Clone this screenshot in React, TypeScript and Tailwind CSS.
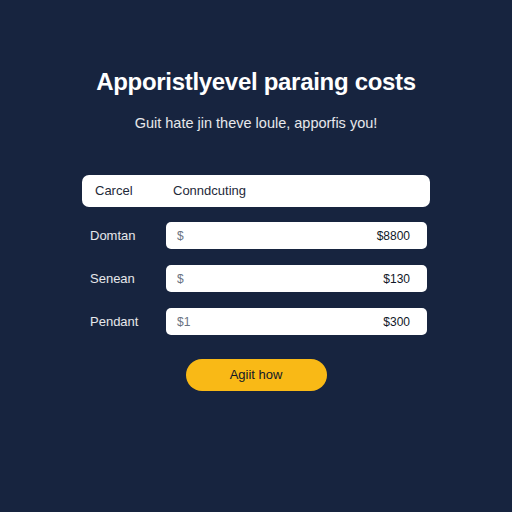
import React from "react";

const ROWS = [
	{ label: "Domtan", prefix: "$", amount: "$8800" },
	{ label: "Senean", prefix: "$", amount: "$130" },
	{ label: "Pendant", prefix: "$1", amount: "$300" },
];

export default function App(): React.ReactElement {
	return (
		<div
			className="w-[512px] h-[512px] bg-[#17243f] flex flex-col items-center text-white"
			style={{ fontFamily: "'Liberation Sans', Arial, sans-serif" }}
		>
			<h1 className="mt-[66px] text-[24px] leading-[32px] font-bold tracking-[-0.3px]">
				Apporistlyevel paraing costs
			</h1>
			<p className="mt-[16px] text-[14.5px] leading-[18px] text-white/90">Guit hate jin theve loule, apporfis you!</p>

			{/* top select-like field */}
			<div className="mt-[43px] w-[348px] h-[32px] bg-white rounded-[7px] flex items-center text-[13px] text-gray-800">
				<span className="w-[91px] pl-[13px]">Carcel</span>
				<span>Conndcuting</span>
			</div>

			<div className="mt-[15px] w-[348px] flex flex-col gap-[16px]">
				{ROWS.map(row => (
					<div key={row.label} className="flex items-center">
						<span className="w-[84px] pl-[8px] text-[13px] text-white/90">{row.label}</span>
						<div className="w-[261px] h-[27px] bg-white rounded-[5px] flex items-center justify-between px-[11px] pr-[17px] text-[12px]">
							<span className="text-gray-500">{row.prefix}</span>
							<span className="text-gray-900">{row.amount}</span>
						</div>
					</div>
				))}
			</div>

			<button className="mt-[24px] w-[141px] h-[32px] rounded-full bg-[#f9b916] text-[13px] text-gray-900">
				Agiit how
			</button>
		</div>
	);
}
